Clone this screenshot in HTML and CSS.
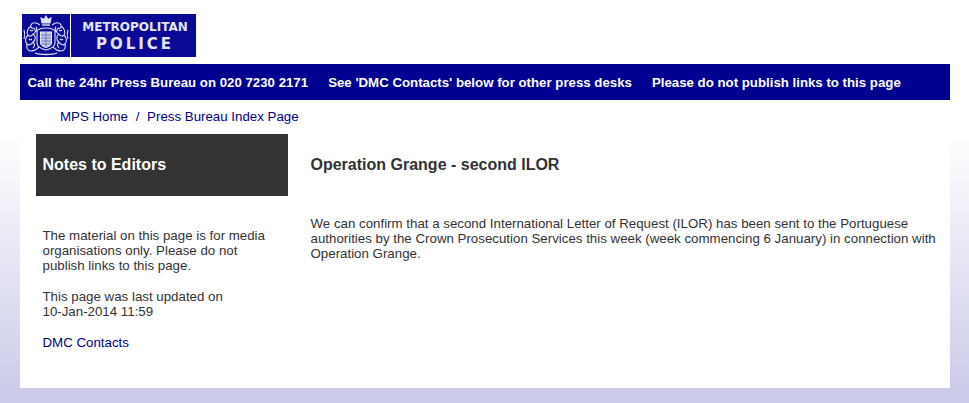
FILE: index.html
```html
<!DOCTYPE html>
<html lang="en">
<head>
  <meta charset="UTF-8">
  <title>Operation Grange - second ILOR</title>
  <link rel="stylesheet" href="styles.css">
</head>
<body>
  <div class="logo">
    <div class="crest">
      <svg width="48" height="43" viewBox="0 0 48 43" fill="none" stroke="#dfe0f4" stroke-width="1.1">
        <!-- crown -->
        <path d="M20 9 L19 4 L22 5.5 L24 2 L26 5.5 L29 4 L28 9 Z" fill="#dfe0f4"/>
        <path d="M20 11 H28" stroke-width="1.4"/>
        <!-- garter and shield -->
        <path d="M15 17 C18 13 30 13 33 17 L33 29 C33 33 28 35 24 36 C20 35 15 33 15 29 Z"/>
        <path d="M18.500 18 H29.500 V29 C29.500 31 26 33 24 33.500 C22 33 18.500 31 18.500 29 Z" fill="#c4c6e6" stroke="#e8e8f6"/>
        <path d="M19 21 H29 M19 24 H29 M19 27 H29 M19 30 H29 M24 18 V33" stroke="#5a5cb8" stroke-width="0.7"/>
        <!-- left lion -->
        <path d="M18 11 C14 8 10 8 9 11 C8 13 10 15 12 14 M9 12 C6 14 4 18 6 21 C7 23 10 22 11 20 M6 21 C3 24 3 28 5 30 C7 32 10 30 11 28 M5 30 C4 33 5 37 9 37 C12 37 15 35 17 33"/>
        <path d="M12 14 C14 17 14 19 11 20 M11 20 C14 22 14 26 11 28 M11 28 C13 30 13 32 11 34 M14 13 C15 14 15 16 14 18"/>
        <path d="M2 16 C3 19 3 22 2 25 M8 16 C9 17 10 17 11 16 M7 25 C8 26 9 26 10 25"/>
        <!-- right lion -->
        <path d="M30 11 C34 8 38 8 39 11 C40 13 38 15 36 14 M39 12 C42 14 44 18 42 21 C41 23 38 22 37 20 M42 21 C45 24 45 28 43 30 C41 32 38 30 37 28 M43 30 C44 33 43 37 39 37 C36 37 33 35 31 33"/>
        <path d="M36 14 C34 17 34 19 37 20 M37 20 C34 22 34 26 37 28 M37 28 C35 30 35 32 37 34 M34 13 C33 14 33 16 34 18"/>
        <path d="M46 16 C45 19 45 22 46 25 M40 16 C39 17 38 17 37 16 M41 25 C40 26 39 26 38 25"/>
        <!-- motto -->
        <path d="M13 39 C18 41 30 41 35 39" stroke-width="1.3"/>
      </svg>
    </div>
    <div class="logo-name">
      <div class="logo-top">METROPOLITAN</div>
      <div class="logo-bottom">POLICE</div>
    </div>
  </div>

  <div class="wrap">
    <div class="notice">
      <span>Call the 24hr Press Bureau on 020 7230 2171</span>
      <span>See 'DMC Contacts' below for other press desks</span>
      <span>Please do not publish links to this page</span>
    </div>

    <div class="crumbs">
      <a href="#">MPS Home</a> <span class="sep">/</span> <a href="#">Press Bureau Index Page</a>
    </div>

    <div class="main">
      <div class="side">
        <h2 class="side-title">Notes to Editors</h2>
        <div class="side-text">
          <p>The material on this page is for media<br>organisations only. Please do not<br>publish links to this page.</p>
          <p>This page was last updated on<br>10-Jan-2014 11:59</p>
          <p><a href="#">DMC Contacts</a></p>
        </div>
      </div>
      <div class="content">
        <h1 class="content-title">Operation Grange - second ILOR</h1>
        <p class="content-text">We can confirm that a second International Letter of Request (ILOR) has been sent to the Portuguese authorities by the Crown Prosecution Services this week (week commencing 6 January) in connection with Operation Grange.</p>
      </div>
    </div>
  </div>
</body>
</html>
```

FILE: styles.css
```css
html { height: 100%; }
body { margin: 0; min-height: 403px; box-sizing: border-box; padding-top: 14px; font-family: "Liberation Sans", Arial, sans-serif; font-size: 13.3px; line-height: 15px; color: #333; overflow: hidden;
  background: linear-gradient(to bottom, #fff 0, #fff 134px, #ccccea 388px, #ccccea 403px); }
a { color: #000080; text-decoration: none; }
p { margin: 0 0 16px; }

.logo { display: flex; width: 174px; height: 43px; margin-left: 22px; background: #0a0a96; }
.crest { width: 48px; border-right: 1px solid #fff; }
.crest svg { display: block; }
.logo-name { flex: 1; text-align: center; color: #e4e4f6; font-family: "DejaVu Sans", sans-serif; font-weight: bold; padding: 6px 0 0 3px; }
.logo-top { font-size: 12px; line-height: 14px; }
.logo-bottom { font-size: 15px; line-height: 21px; letter-spacing: 3px; }

.wrap { width: 930px; margin: 7px 0 15px 20px; background: #fff; }
.notice { display: flex; gap: 20px; height: 36px; padding-left: 7.5px; align-items: center; background: #000090; color: #fff; font-size: 13.25px; font-weight: bold; }

.crumbs { height: 34px; padding-left: 40px; line-height: 33px; color: #000080; }
.crumbs .sep { margin: 0 4px; }

.main { display: flex; height: 254px; padding-left: 16px; }
.side { width: 252px; }
.side-title { margin: 0; height: 62px; padding-left: 6.5px; background: #333; color: #fff; font-size: 16px; line-height: 61px; }
.side-text { padding: 32px 6.5px 0; }
.content { flex: 1; padding-left: 22.5px; padding-right: 10px; }
.content-title { margin: 0; height: 75px; font-size: 16px; line-height: 61px; color: #333; }
.content-text { margin: 0; padding-top: 7px; }
```
